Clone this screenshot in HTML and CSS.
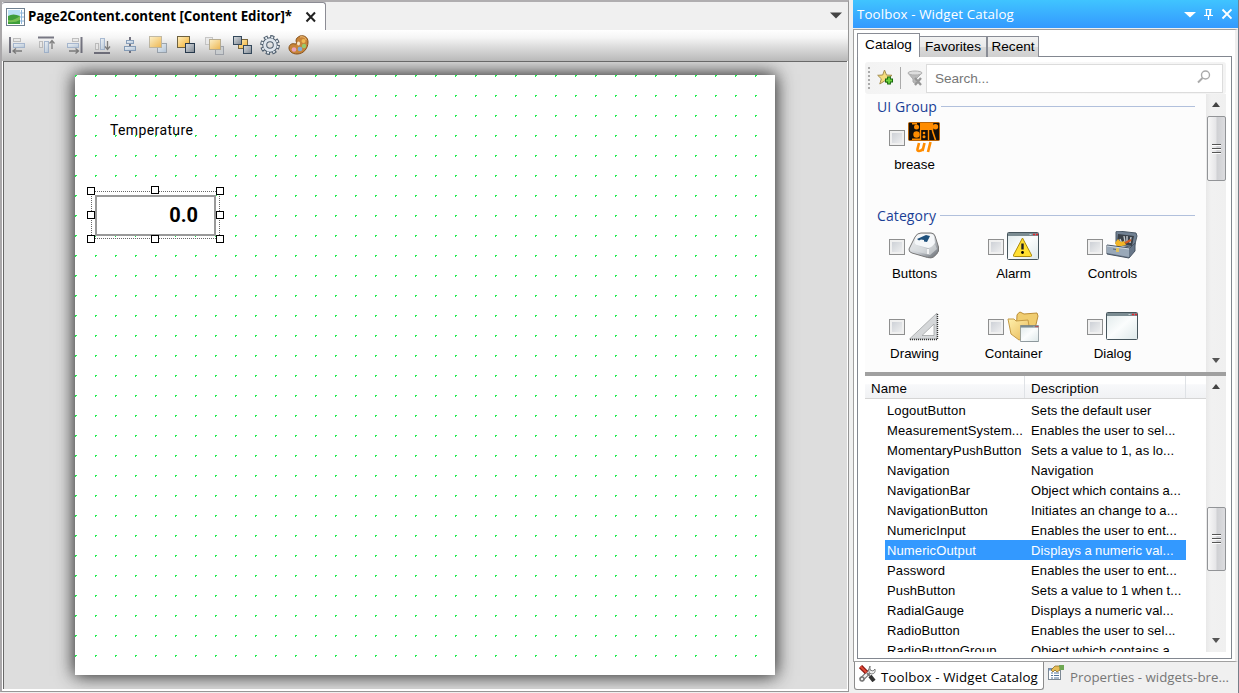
FILE: index.html
```html
<!DOCTYPE html>
<html lang="en">
<head>
<meta charset="utf-8">
<title>Content Editor</title>
<link rel="stylesheet" href="styles.css">
</head>
<body>
<svg class="defs" width="0" height="0" aria-hidden="true">
  <defs>
    <linearGradient id="blue" x2="1" y2="1"><stop offset="0" stop-color="#f0f6fb"/><stop offset="1" stop-color="#a9bfd6"/></linearGradient>
    <linearGradient id="gold" x2="1" y2="1"><stop offset="0" stop-color="#fff0c0"/><stop offset="1" stop-color="#f2ae2e"/></linearGradient>
    <linearGradient id="steel" x2="1" y2="1"><stop offset="0" stop-color="#d8dde2"/><stop offset="1" stop-color="#7e8790"/></linearGradient>
    <linearGradient id="glass" x2="1" y2="1"><stop offset="0" stop-color="#dfe9ea"/><stop offset=".5" stop-color="#fbfdfd"/><stop offset="1" stop-color="#dde8e9"/></linearGradient>
    <linearGradient id="key" x2="1" y2="1"><stop offset="0" stop-color="#ffffff"/><stop offset=".55" stop-color="#c9cdd2"/><stop offset="1" stop-color="#62676d"/></linearGradient>
    <linearGradient id="folder" x2="1" y2="1"><stop offset="0" stop-color="#fff0ac"/><stop offset="1" stop-color="#e5b552"/></linearGradient>
    <symbol id="window" viewBox="0 0 32 28">
      <rect x=".5" y=".5" width="31" height="27" rx="1" fill="url(#glass)" stroke="#46555c"/>
      <rect x="1" y="1" width="30" height="3" fill="#7b8c92"/>
      <path d="M26 2.5h2M29 2.5h2" stroke="#e3262c" stroke-width="1.6"/><path d="M22.500 2.500h2" stroke="#c5d0d2"/>
    </symbol>
  </defs>
</svg>
<div class="app">
  <main class="editor">
    <div class="doc-strip">
      <div class="doc-tab">
        <svg class="doc-icon" width="20" height="18" viewBox="0 0 20 18"><rect x=".5" y=".5" width="18" height="17" fill="#fff" stroke="#708090"/><rect x="2" y="2" width="12" height="14" fill="#b9e1f4"/><path d="M2 8q5-3 12 0v8H2z" fill="#3e9e3b"/><path d="M2 12q6 1 12-4v4q-5 3-12 2z" fill="#77bf53"/><path d="M15.500 2v14M14 5h4M14 9h4M14 13h4" stroke="#8db5da"/></svg>
        <span class="doc-title">Page2Content.content [Content Editor]*</span>
        <svg class="doc-close" width="12" height="12" viewBox="0 0 12 12"><path d="M1.500 1.500l8.500 9M10 1.500l-8.500 9" stroke="#222" stroke-width="2"/></svg>
      </div>
      <svg class="doc-menu" width="12" height="7" viewBox="0 0 12 7"><path d="M0 .5h12L6 6.500z" fill="#444"/></svg>
    </div>
    <div class="toolbar">
      <svg class="dim" width="20" height="20" viewBox="0 0 20 20"><path d="M2 2v16" stroke="#445" stroke-width="2"/><rect x="5.500" y="3.500" width="7" height="3" fill="#e8e8e8" stroke="#aaa"/><rect x="5.500" y="8.500" width="11" height="4" fill="url(#blue)" stroke="#8ba3c4"/><path d="M5 16h9M8 13.500L5 16l3 2.500" stroke="#555" fill="none" stroke-width="1.300"/></svg>
      <svg class="dim" width="20" height="20" viewBox="0 0 20 20"><path d="M2 2.500h16" stroke="#445" stroke-width="2"/><rect x="3.500" y="6.500" width="3" height="6" fill="#e8e8e8" stroke="#aaa"/><rect x="8.500" y="6.500" width="4" height="11" fill="url(#blue)" stroke="#8ba3c4"/><path d="M16 14V6M13.500 8.500L16 5.500l2.500 3" stroke="#555" fill="none" stroke-width="1.300"/></svg>
      <svg class="dim" width="20" height="20" viewBox="0 0 20 20"><path d="M17.500 2v16" stroke="#445" stroke-width="2"/><rect x="8.500" y="3.500" width="6" height="3" fill="#e8e8e8" stroke="#aaa"/><rect x="3.500" y="8.500" width="11" height="4" fill="url(#blue)" stroke="#8ba3c4"/><path d="M5 16h9M11.500 13.500l3 2.500-3 2.500" stroke="#555" fill="none" stroke-width="1.300"/></svg>
      <svg class="dim" width="20" height="20" viewBox="0 0 20 20"><path d="M2 18h16" stroke="#445" stroke-width="2"/><rect x="3.500" y="8.500" width="3" height="6" fill="#e8e8e8" stroke="#aaa"/><rect x="8.500" y="3.500" width="4" height="11" fill="url(#blue)" stroke="#8ba3c4"/><path d="M15.500 6v8M13 11.500l2.500 3 2.500-3" stroke="#555" fill="none" stroke-width="1.300"/></svg>
      <svg class="mid" width="20" height="20" viewBox="0 0 20 20"><path d="M10 2v16" stroke="#556" stroke-width="2"/><rect x="6.500" y="5.500" width="7" height="3" fill="url(#blue)" stroke="#6f8cae"/><rect x="4.500" y="11.500" width="11" height="4" fill="url(#blue)" stroke="#6f8cae"/></svg>
      <svg class="mid" width="20" height="20" viewBox="0 0 20 20"><rect x="9.500" y="8.500" width="9" height="9" fill="url(#blue)" stroke="#8a95a0"/><rect x="1.500" y="1.500" width="12" height="11" fill="url(#gold)" stroke="#b3aa91"/></svg>
      <svg width="20" height="20" viewBox="0 0 20 20"><rect x="1.500" y="1.500" width="12" height="11" fill="url(#gold)" stroke="#6e613f"/><rect x="9.500" y="8.500" width="9" height="9" fill="url(#steel)" stroke="#26384b"/></svg>
      <svg class="mid" width="20" height="20" viewBox="0 0 20 20"><rect x="1.500" y="2.500" width="7" height="7" fill="#e9e9e9" stroke="#bbb"/><rect x="11.500" y="11.500" width="8" height="8" fill="#c8cdd0" stroke="#9297a0"/><rect x="5.500" y="4.500" width="11" height="10" fill="url(#gold)" stroke="#aa9c7a"/></svg>
      <svg width="20" height="20" viewBox="0 0 20 20"><rect x="6.500" y="4.500" width="9" height="9" fill="url(#gold)" stroke="#7b683d"/><rect x="1.500" y="1.500" width="8" height="8" fill="url(#steel)" stroke="#34485b"/><rect x="11.500" y="10.500" width="8" height="8" fill="url(#steel)" stroke="#34485b"/></svg>
      <svg width="20" height="20" viewBox="0 0 20 20"><g fill="none"><circle cx="10" cy="10" r="8.200" stroke="#4c5c6c" stroke-width="3.400" stroke-dasharray="4 2.440"/><circle cx="10" cy="10" r="5.300" stroke="#4c5c6c" stroke-width="5"/><circle cx="10" cy="10" r="8" stroke="#eef3f7" stroke-width="1.800" stroke-dasharray="2 4.283" stroke-dashoffset="-1"/><circle cx="10" cy="10" r="5.300" stroke="#dfe6ed" stroke-width="3"/></g></svg>
      <svg width="21" height="20" viewBox="0 0 21 20"><path d="M12 1C16 0 20 2 20 7c0 7-5 12-11 12-5 0-8-3-8-6 0-4 4-5 6-4 2 0 2-1 1-3 0-3 2-4 4-5z" fill="#c78439" stroke="#875018"/><path d="M12 2c3-1 6 1 6 3" stroke="#f1c27c" fill="none"/><circle cx="15.500" cy="6" r="2" fill="#f0bb54"/><circle cx="16" cy="11" r="2.200" fill="#98ca6b"/><circle cx="12" cy="14" r="2.300" fill="#80abd8"/><circle cx="6" cy="14.500" r="2.300" fill="#e7a2bd"/><ellipse cx="10.500" cy="8.500" rx="1.500" ry="2" fill="#f7e4c6"/></svg>
    </div>
    <section class="workspace">
      <div class="page">
        <div class="label-widget">Temperature</div>
        <div class="output-widget">
          <div class="output-box">0.0</div>
          <i class="grip nw"></i><i class="grip n"></i><i class="grip ne"></i><i class="grip w"></i><i class="grip e"></i><i class="grip sw"></i><i class="grip s"></i><i class="grip se"></i>
        </div>
      </div>
    </section>
  </main>

  <aside class="toolbox">
    <header class="tool-title">
      <span class="tool-title-text">Toolbox - Widget Catalog</span>
      <svg width="48" height="14" viewBox="0 0 48 14" fill="none" stroke="#fff"><path d="M0 5h12L6 10.500z" fill="#fff" stroke="none"/><path d="M21.500 2.500h6M22.500 2v6.500M26.500 2v6.500M20 8.500h9M24.500 9v4" stroke-width="1.200"/><path d="M26 3v5" stroke-width="1.500"/><path d="M38.500 2.500l9 9M47.500 2.500l-9 9" stroke-width="1.900"/></svg>
    </header>
    <div class="tool-body">
      <nav class="tabs"><span class="tab active">Catalog</span><span class="tab fav">Favorites</span><span class="tab rec">Recent</span></nav>
      <div class="tab-page">
        <div class="search-bar">
          <span class="dots"></span>
          <svg class="star" width="18" height="18" viewBox="0 0 18 18"><path d="M7.500 1l2 5 5.500.3-4.200 3.500 1.400 5.200-4.700-3-4.700 3 1.500-5.200L.7 6.300l5-.3z" fill="#f4dc7c" stroke="#a58f51"/><path d="M12 7.500v8M8 11.500h8" stroke="#17680e" stroke-width="3.800"/><path d="M12 8.500v6M9 11.500h6" stroke="#70d43c" stroke-width="1.800"/></svg>
          <span class="divider"></span>
          <svg class="funnel" width="17" height="17" viewBox="0 0 17 17"><path d="M1 3l5 6v3l3 2V9l6-6z" fill="#b9b9b9" stroke="#aaa"/><ellipse cx="8" cy="3" rx="7" ry="2" fill="#dedede" stroke="#b0b0b0"/><path d="M8 8l6 7M14 8l-6 7" stroke="#969696" stroke-width="2.300"/></svg>
          <div class="search"><span>Search...</span><svg width="14" height="14" viewBox="0 0 14 14" fill="none" stroke="#aaa"><circle cx="8.500" cy="5" r="4" stroke-width="1.400"/><path d="M5.500 8L1 12.500" stroke-width="2"/></svg></div>
        </div>
        <div class="catalog">
          <div class="catalog-main">
            <section class="group ui-group">
              <h2><span>UI Group</span></h2>
              <div class="cells">
                <div class="cell"><div class="pick"><i class="check"></i>
                  <svg width="32" height="32" viewBox="0 0 32 32"><rect x=".5" y=".5" width="31" height="18" rx="1" fill="#15100a" stroke="#b9660b"/><path d="M12 1h12v7H12z" fill="#ff8c00"/><circle cx="8.500" cy="5" r="2.500" fill="#ff8c00"/><circle cx="8.500" cy="12.500" r="3.200" fill="#ff8c00"/><path d="M4 1v1.500h5V1zM4 18v-1.500h8V18z" fill="#ff8c00"/><path d="M12.500 8v10M20.500 8v10" stroke="#ff8c00" stroke-width="1.400"/><circle cx="16" cy="11" r="1.300" fill="#ff8c00"/><circle cx="16" cy="14.700" r="1.500" fill="#ff8c00"/><circle cx="27.500" cy="4.800" r="2.700" fill="#ff8c00"/><path d="M24.500 9l3 9M24.500 9V1" stroke="#ff8c00" stroke-width="1.600"/><path d="M11 21l-1.500 6q-.5 2 1.500 2t4-2l1.500-6M14.500 29l2-8M22.500 20l-2.500 10" stroke="#ff8c00" stroke-width="2.600" fill="none"/></svg></div><b>brease</b></div>
              </div>
            </section>
            <section class="group">
              <h2><span>Category</span></h2>
              <div class="cells">
                <div class="cell"><div class="pick"><i class="check"></i>
                  <svg width="32" height="32" viewBox="0 0 32 32"><path d="M7 6Q9 2 13 2h10q3 0 4 3l3.500 11v4q-1 3-5 6-2 1.500-6 .5L4 22q-3.500-1-3-4z" fill="url(#key)" stroke="#777"/><path d="M8 6q2-3 6-3h9q2 0 3 2l1 7q-3 5-7 5L9 14q-3-1-2-4z" fill="#f5f7f9"/><path d="M2 19l5-5 13 4 7-5 2 5-7 6z" fill="#dfe2e5" opacity=".6"/><path d="M20 18v5" stroke="#fff" stroke-width="1.500"/><path d="M9 8l9-4 4 1-3 6-3-.5V9l-3-.5-2 1z" fill="#1e507c"/></svg></div><b>Buttons</b></div>
                <div class="cell"><div class="pick"><i class="check"></i>
                  <svg width="32" height="32" viewBox="0 0 32 32"><use href="#window" width="32" height="28" y="1"/><path d="M15.500 7L24.500 24q.5 1.500-1 1.500h-16Q6 25.500 6.500 24z" fill="#ffdf31" stroke="#ad8b0c"/><path d="M15.500 12.500v6" stroke="#222" stroke-width="2.400"/><circle cx="15.500" cy="21.500" r="1.400"/></svg></div><b>Alarm</b></div>
                <div class="cell"><div class="pick"><i class="check"></i>
                  <svg width="32" height="32" viewBox="0 0 32 32"><path d="M10 1q0-1 2-1l18 2 1 3-3 12-18-4z" fill="#718193" stroke="#4b5967"/><path d="M12 3l16 2-2 10-15-3z" fill="#3a4149"/><path d="M14 8l2 5M18 5l1 6M21 5v6M25 6l-1 6" stroke="#c5cbd0" stroke-width="1.400"/><path d="M9 12l3-4 3 3 3-1 2 4-9 2z" fill="#f2b526"/><path d="M19 12l6-3" stroke="#d45b25" stroke-width="2"/><path d="M1 14l23 3 5-5v8l-6 7L1 23z" fill="#687789" stroke="#485463"/><path d="M1 15l22 3v8L1 22z" fill="#99a8b8"/><path d="M1 15l22 3" stroke="#d3dce4"/><path d="M7 18l6 1" stroke="#5c6773"/><rect x="10" y="17" width="3" height="4" fill="#dec060"/></svg></div><b>Controls</b></div>
                <div class="cell"><div class="pick"><i class="check"></i>
                  <svg width="32" height="32" viewBox="0 0 32 32"><path fill-rule="evenodd" d="M1.500 28L29 2v26zM14 24.500h12V13z" fill="#d5d7d9" stroke="#a2a4a6" stroke-width=".8"/><path d="M2 28.500h28M29.500 3v26" stroke="#333" stroke-width="1.400" stroke-dasharray="1 1"/></svg></div><b>Drawing</b></div>
                <div class="cell"><div class="pick"><i class="check"></i>
                  <svg width="32" height="32" viewBox="0 0 32 32"><path d="M10 4q1-2 3-3l4 2 13-1 1 3-4 17-18 4z" fill="#f0cd70" stroke="#bc8e36"/><path d="M1 8h6l2 2 12-1 3 17-12 3-8-6z" fill="url(#folder)" stroke="#c49a45"/><use href="#window" x="13" y="14" width="19" height="17"/></svg></div><b>Container</b></div>
                <div class="cell"><div class="pick"><i class="check"></i>
                  <svg width="32" height="32" viewBox="0 0 32 32"><use href="#window" width="32" height="28" y="1"/></svg></div><b>Dialog</b></div>
              </div>
            </section>
          </div>
          <div class="scroll top-scroll"><i class="up"></i><i class="thumb"><s></s></i><i class="down"></i></div>
        </div>
        <div class="list">
          <div class="list-main">
            <div class="row head"><span>Name</span><span>Description</span></div>
            <div class="row"><span>LogoutButton</span><span>Sets the default user</span></div>
            <div class="row"><span>MeasurementSystem...</span><span>Enables the user to sel...</span></div>
            <div class="row"><span>MomentaryPushButton</span><span>Sets a value to 1, as lo...</span></div>
            <div class="row"><span>Navigation</span><span>Navigation</span></div>
            <div class="row"><span>NavigationBar</span><span>Object which contains a...</span></div>
            <div class="row"><span>NavigationButton</span><span>Initiates an change to a...</span></div>
            <div class="row"><span>NumericInput</span><span>Enables the user to ent...</span></div>
            <div class="row selected"><span>NumericOutput</span><span>Displays a numeric val...</span></div>
            <div class="row"><span>Password</span><span>Enables the user to ent...</span></div>
            <div class="row"><span>PushButton</span><span>Sets a value to 1 when t...</span></div>
            <div class="row"><span>RadialGauge</span><span>Displays a numeric val...</span></div>
            <div class="row"><span>RadioButton</span><span>Enables the user to sel...</span></div>
            <div class="row"><span>RadioButtonGroup</span><span>Object which contains a...</span></div>
          </div>
          <div class="scroll list-scroll"><i class="up"></i><i class="thumb"><s></s></i><i class="down"></i></div>
        </div>
      </div>
    </div>
    <footer class="dock">
      <div class="dock-tab on"><svg width="17" height="17" viewBox="0 0 17 17"><path d="M2 15L12 5" stroke="#555" stroke-width="4.500"/><path d="M2 15L12 5" stroke="#eee" stroke-width="2.500"/><circle cx="3" cy="14" r="2" fill="none" stroke="#777" stroke-width="1.500"/><path d="M11 1v4l3 1 2-2q1 5-4 5-4-2-1-8z" fill="#eee" stroke="#666" stroke-width=".8"/><path d="M1.500 1.500l6 6" stroke="#8a1712" stroke-width="4.500"/><path d="M1.500 1.500l6 6" stroke="#e14b38" stroke-width="2"/><path d="M8 8l3 3" stroke="#777" stroke-width="2"/><path d="M11 11l4 5" stroke="#333" stroke-width="4"/></svg><span>Toolbox - Widget Catalog</span></div>
      <div class="dock-tab off"><svg width="17" height="16" viewBox="0 0 17 16"><rect x=".5" y="3.500" width="12" height="11" fill="#fff" stroke="#7c8893"/><path d="M1 4.500h11" stroke="#6f9bd3" stroke-width="2"/><path d="M3 8h2M6 8h5M3 10.500h2M6 10.500h5M3 13h2M6 13h5" stroke="#51749b"/><path d="M3 5l4-4h5v4l-3 2-2-2-2 2z" fill="#e6bd57" stroke="#80601e" stroke-width=".7"/><path d="M11 0h5v5h-4z" fill="#6fa853"/></svg><span>Properties - widgets-bre...</span></div>
    </footer>
  </aside>
</div>
</body>
</html>
```
FILE: styles.css
```css
* { box-sizing: border-box; }
body { margin: 0; width: 1239px; height: 693px; overflow: hidden; background: #f0f0f0; font-family: "Liberation Sans", Arial, sans-serif; font-size: 13px; color: #000; }
svg { display: block; flex: none; }
.defs { position: absolute; }
.app { display: flex; height: 693px; gap: 4px; }

.editor { width: 849px; height: 692px; border: 1px solid #969696; border-width: 2px 1px 1px 2px; border-color: #b0aeb0 #969696 #969696 #aaa8aa; display: flex; flex-direction: column; background: #fff; }
.doc-strip { height: 28px; background: #f0f0f0; display: flex; justify-content: space-between; align-items: flex-start; padding-right: 6px; }
.doc-tab { height: 28px; width: 324px; background: #fff; border: 1px solid #8c8c94; border-width: 1px 1px 0 0; border-radius: 3px 3px 0 0; display: flex; align-items: center; padding-left: 4px; }
.doc-title { font: bold 13.3px/18px "Open Sans", sans-serif; letter-spacing: -.03px; width: 277px; margin: -2px 0 0 2px; white-space: nowrap; }
.doc-menu { margin-top: 10px; }
.toolbar { height: 31px; background: linear-gradient(#fff, #f5f5f5 25%, #d8d8d8 60%, #b9b9b9); display: flex; gap: 8px; padding: 5px 5px 0 6px; flex: none; }
.dim { opacity: .7; }
.mid { opacity: .8; }
.workspace { flex: 1; margin: 0 1px 2px; border: solid #696969; border-width: 1px 0 0 1px; background: #ddd; padding: 13px 0 0 71px; overflow: hidden; }
.page { width: 700px; height: 600px; box-shadow: 0 0 17px 1px #222; padding: 47px 0 0 16px; background: conic-gradient(from 0deg at 2px 1px, transparent 75%, #20ef50 0) 0 0 / 20px 20px, conic-gradient(from 0deg at 1px 2px, transparent 75%, #20ef50 0) 0 0 / 20px 20px, #fff; }
.label-widget { font: 14px/17px Roboto, "Liberation Sans", sans-serif; letter-spacing: .38px; padding-left: 19px; margin-bottom: 52px; }
.output-widget { position: relative; width: 129px; height: 48px; border: 1px dotted #666; padding: 3px; }
.output-box { width: 121px; height: 41px; border: 2px solid #999; background: #fff; font: bold 20px/36px Roboto, "Liberation Sans", sans-serif; text-align: right; padding-right: 16px; }
.grip { position: absolute; width: 8px; height: 8px; background: #fff; border: 1px solid #000; }
.nw, .w, .sw { left: -5px; }
.n, .s { left: 59px; }
.ne, .e, .se { right: -5px; }
.nw, .n, .ne { top: -5px; }
.n { top: -6px; }
.w, .e { top: 19px; }
.sw, .s, .se { bottom: -5px; }

.toolbox { flex: 1; display: flex; flex-direction: column; border-right: 1px solid #777f89; }
.tool-title { height: 28px; background: linear-gradient(#40c4ff, #3399ff); display: flex; align-items: center; justify-content: space-between; padding: 0 6px 0 4px; color: #fff; }
.tool-title-text { font: 13.3px "Open Sans", sans-serif; letter-spacing: .12px; }
.tool-body { margin-top: 1px; height: 633px; background: #fff; border: 1px solid #a0a0a0; border-right: 3px solid #eee; padding: 3px 3px 2px 3px; flex: none; }
.tabs { height: 24px; display: flex; align-items: flex-end; position: relative; font-size: 13.6px; }
.tab { height: 21px; line-height: 20px; border: 1px solid #898c95; border-bottom: 0; background: linear-gradient(#f2f2f2, #eaeaea 48%, #dadada 50%, #cfcfcf); text-align: center; }
.tab.active { position: relative; width: 63px; height: 24px; background: #fff; line-height: 21px; }
.fav { width: 67px; border-left: 0; }
.rec { width: 52px; }
.tab-page { height: 603px; margin-top: -1px; border: 1px solid #828790; background: #fff; padding: 5px 5px 5px 7px; }
.search-bar { height: 32px; display: flex; align-items: center; background: linear-gradient(90deg, #f3f3f3, #fafafa 40%, #f3f3f3); border-radius: 3px; padding: 0 1px 0 3px; }
.dots { width: 2px; height: 23px; background: repeating-linear-gradient(#aaa 0 2px, transparent 2px 4px); }
.star { margin-left: 7px; }
.divider { width: 1px; height: 22px; background: #aaa; margin: 0 6px 0 5px; }
.search { height: 29px; width: 297px; margin-left: auto; margin-right: 2px; background: #fff; border: 1px solid #dcdcdc; display: flex; justify-content: space-between; align-items: center; padding: 0 11px 2px 8px; color: #777; font-size: 13.6px; }
.search span { position: relative; top: 1px; letter-spacing: -.05px; }
.catalog { height: 278px; display: flex; background: #fcfcfc; }
.catalog-main { width: 341px; padding-top: 3px; }
.group { height: 109px; }
.group h2 { height: 20px; margin: 0 11px 0 12px; display: flex; align-items: center; gap: 4px; color: #1a3f96; font: 14px/20px "Open Sans", sans-serif; }
.group h2 span { letter-spacing: .1px; }
.group h2::after { content: ""; flex: 1; height: 1px; margin-bottom: 1px; background: #b1c0dc; }
.cells { display: grid; grid-template-columns: repeat(3, 99px); grid-auto-rows: 80px; padding-top: 5px; }
.cell { display: flex; flex-direction: column; align-items: center; }
.cell b { font-weight: normal; line-height: 18px; padding-top: 2px; font-size: 13.3px; }
.pick { display: flex; gap: 3px; align-items: center; height: 32px; }
.check { width: 16px; height: 16px; border: 1px solid #8e8f8f; background: linear-gradient(135deg, #c7cbd2, #f4f4f4); box-shadow: inset 0 0 0 2px #f0f0f0; }
.scroll { width: 20px; display: flex; flex-direction: column; align-items: center; background: linear-gradient(90deg, #e8e8e8, #f1f1f1 25%, #f0f0f0); }
.up { border: 4px solid transparent; border-bottom: 5px solid #444; border-top: 0; }
.down { border: 4px solid transparent; border-top: 5px solid #555; border-bottom: 0; margin-top: auto; }
.thumb { width: 19px; border: 1px solid #929497; border-radius: 2px; background: linear-gradient(90deg, #f7f7f7, #e5e5e7 48%, #cfd0d3 52%, #dcdcdf); display: flex; align-items: center; justify-content: center; }
.thumb s { width: 9px; height: 10px; background: repeating-linear-gradient(#555 0 1px, #fff 1px 2px, transparent 2px 4px); }
.top-scroll { padding: 8px 0 9px; }
.top-scroll .thumb { height: 65px; margin-top: 9px; }
.list { height: 280px; display: flex; border-top: 4px solid #a0a0a0; overflow: hidden; }
.list-main { width: 341px; overflow: hidden; }
.row { height: 20px; margin: 0 20px; display: flex; line-height: 22px; white-space: nowrap; letter-spacing: .12px; }
.row span:first-child { width: 139px; padding-left: 2px; }
.row span:last-child { padding-left: 7px; flex: 1; word-spacing: -.4px; }
.selected { background: #3399ff; color: #fff; }
.row.head { height: 23px; line-height: 25px; margin: 0 0 1px 0; border-bottom: 1px solid #d5d5d5; background: linear-gradient(#fff 35%, #f7f8fa 40%, #f1f2f4); font-size: 13.3px; }
.head span:first-child { width: 160px; padding-left: 6px; border-right: 1px solid #dfe2e6; }
.head span:last-child { flex: none; width: 161px; padding-left: 6px; border-right: 1px solid #dfe2e6; }
.list-scroll { padding: 8px 0 9px; }
.list-scroll .thumb { height: 64px; margin-top: 118px; }
.dock { height: 31px; display: flex; }
.dock-tab { display: flex; align-items: flex-start; font: 13.3px/18px "Open Sans", sans-serif; white-space: nowrap; letter-spacing: .12px; }
.dock-tab span { padding-top: 3px; }
.off span { letter-spacing: 0; }
.on { width: 190px; height: 28px; margin-left: 1px; background: #fff; border: 1px solid #8c8c8c; border-top: 0; border-radius: 0 0 3px 3px; padding: 3px 0 0 4px; gap: 5px; }
.off { padding: 3px 0 0 4px; gap: 5px; color: #777; }
```
